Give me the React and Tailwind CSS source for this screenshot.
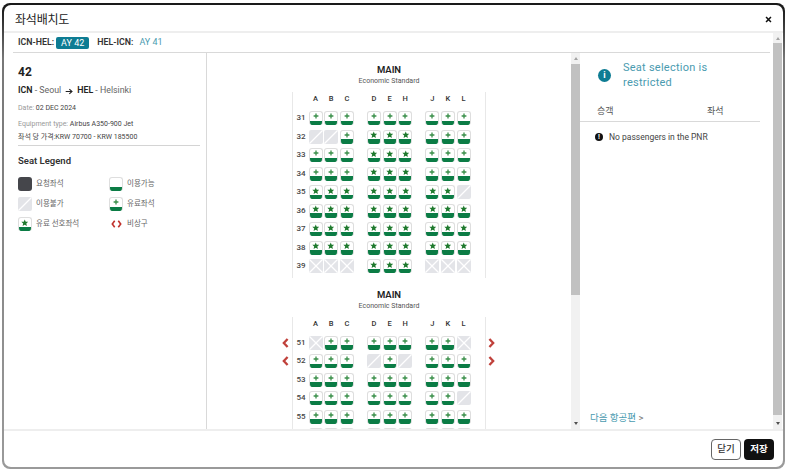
import React from "react";

const FONT = "font-['Roboto','Noto_Sans_CJK_KR','Noto_Sans',sans-serif]";

function Glyph({ type }) {
  if (type === "star") {
    return (
      <svg viewBox="0 0 10 10" className="h-[7.5px] w-[7.5px]">
        <polygon points="5,0.5 6.3,3.6 9.6,3.8 7.1,6 7.9,9.3 5,7.5 2.1,9.3 2.9,6 0.4,3.8 3.7,3.6" fill="#1f7a2e" />
      </svg>
    );
  }
  return (
    <svg viewBox="0 0 10 10" className="h-[6px] w-[6px]">
      <path d="M5 1V9M1 5H9" stroke="#3a8f4a" strokeWidth="2.2" fill="none" />
    </svg>
  );
}

function Seat({ type, size = "h-[14px] w-[14px]" }) {
  if (type === "blocked" || type === "x") {
    return (
      <div className={`${size} shrink-0 overflow-hidden rounded-[2px] bg-[#e3e4e8]`}>
        <svg viewBox="0 0 14 14" className="block h-full w-full">
          <path d="M0.5 13.5L13.5 0.5" stroke="#fff" strokeWidth="1.3" />
          {type === "x" && <path d="M0.5 0.5L13.5 13.5" stroke="#fff" strokeWidth="1.3" />}
        </svg>
      </div>
    );
  }
  return (
    <div className={`${size} flex shrink-0 flex-col overflow-hidden rounded-[3px] border-x border-t border-[#dedede] bg-white`}>
      <div className="flex flex-1 items-center justify-center">
        {type !== "empty" && <Glyph type={type} />}
      </div>
      <div className="-mx-px h-[4.5px] rounded-b-[3px] bg-[#0b7c45]" />
    </div>
  );
}

function Chevron({ dir }) {
  return (
    <svg viewBox="0 0 8 12" className="h-[10px] w-[7px]">
      <path d={dir === "l" ? "M6.5 1.2L2 6L6.5 10.8" : "M1.5 1.2L6 6L1.5 10.8"} stroke="#c0413b" strokeWidth="2.8" fill="none" />
    </svg>
  );
}

const p = "plus", s = "star", b = "blocked", x = "x";
const deck1 = [
  [31, [p, p, p], [p, p, p], [p, p, p]],
  [32, [b, b, p], [s, s, s], [p, p, p]],
  [33, [p, p, p], [s, s, s], [p, p, p]],
  [34, [p, p, p], [s, s, s], [p, p, p]],
  [35, [s, s, s], [s, s, s], [s, s, b]],
  [36, [s, s, s], [s, s, s], [s, s, s]],
  [37, [s, s, s], [s, s, s], [s, s, s]],
  [38, [s, s, s], [s, s, s], [s, s, s]],
  [39, [x, x, x], [s, s, s], [x, x, x]],
];
const deck2 = [
  [51, [x, p, p], [p, p, p], [p, p, x]],
  [52, [p, p, p], [b, p, b], [p, p, p]],
  [53, [p, p, p], [p, p, p], [p, p, p]],
  [54, [p, p, p], [p, p, p], [p, p, b]],
  [55, [p, p, p], [p, p, p], [p, p, p]],
  ["", [p, p, p], [p, p, p], [p, p, p]],
];
const groups = [["A", "B", "C"], ["D", "E", "H"], ["J", "K", "L"]];

function Deck({ rows, arrows }) {
  return (
    <div className="mt-[11px] flex flex-col items-center">
      <div className="h-[12px] text-[9.5px] font-semibold leading-[12px] text-[#222]">MAIN</div>
      <div className="h-[10px] text-[7px] leading-[10px] text-[#555]">Economic Standard</div>
      <div className="mt-[6px] flex flex-col">
        <div className="flex">
          <div className="w-[13px]" />
          <div className="flex h-[19px] w-[194px] border-x-[1.5px] border-[#e8e8e8] pl-[16px] pt-[1px]">
            {groups.map((g) => (
              <div key={g[0]} className="mr-[13px] flex gap-[1.7px]">
                {g.map((l) => (
                  <div key={l} className="h-[12px] w-[14px] text-center text-[7.5px] font-medium leading-[12px] text-[#333]">{l}</div>
                ))}
              </div>
            ))}
          </div>
          <div className="w-[14px]" />
        </div>
        {rows.map((r, i) => (
          <div key={i} className="flex">
            <div className="flex w-[13px] items-start justify-start pl-[3px] pt-[2px]">
              {arrows && i < 2 && <Chevron dir="l" />}
            </div>
            <div className="flex h-[18.5px] w-[194px] border-x-[1.5px] border-[#e8e8e8] pl-[4px]">
              <div className="w-[12px] text-[8px] font-medium leading-[14px] text-[#444]">{r[0]}</div>
              {[r[1], r[2], r[3]].map((g, gi) => (
                <div key={gi} className="mr-[13px] flex gap-[1.7px]">
                  {g.map((t, ti) => <Seat key={ti} type={t} />)}
                </div>
              ))}
            </div>
            <div className="flex w-[14px] items-start justify-end pr-[5px] pt-[2px]">
              {arrows && i < 2 && <Chevron dir="r" />}
            </div>
          </div>
        ))}
      </div>
    </div>
  );
}

function LegendItem({ icon, label }) {
  return (
    <div className="flex h-[14px] items-center gap-[4px]">
      {icon}
      <span className="text-[7.5px] text-[#666]">{label}</span>
    </div>
  );
}

function Scrollbar({ thumbTop, thumbBottom }) {
  return (
    <div className="flex h-full w-[9px] shrink-0 flex-col bg-[#f1f1f1]">
      <div className="flex justify-center" style={{ height: thumbTop }}>
        <div className="mt-[4px] h-0 w-0 border-x-[2.5px] border-b-[3px] border-x-transparent border-b-[#a3a3a3]" />
      </div>
      <div className="flex-1 bg-[#c1c1c1]" />
      <div className="flex items-end justify-center" style={{ height: thumbBottom }}>
        <div className="mb-[4px] h-0 w-0 border-x-[2.5px] border-t-[3px] border-x-transparent border-t-[#505050]" />
      </div>
    </div>
  );
}

export default function App() {
  return (
    <div className={`h-[471px] w-[787px] overflow-hidden bg-white pb-[2px] pl-[2px] pr-[2px] pt-[3px] ${FONT}`}>
      <div className="flex h-full flex-col rounded-[8px] bg-[linear-gradient(#1a1a1a,#1a1a1a_1%,#777_12%,#9a9a9a)] pb-[2px] pl-[2px] pr-[2px] pt-[2px]">
        <div className="flex min-h-0 flex-1 flex-col overflow-hidden rounded-[7px] bg-white">
          <div className="flex h-[28px] shrink-0 items-center justify-between border-b-2 border-[#eeeeee] pl-[11px] pr-[11px] pt-[3px]">
            <span className="text-[12px] leading-none tracking-[-0.2px] text-[#222]">좌석배치도</span>
            <svg viewBox="0 0 10 10" className="h-[7px] w-[7px]">
              <path d="M1.5 1.5L8.5 8.5M8.5 1.5L1.5 8.5" stroke="#111" strokeWidth="2.2" />
            </svg>
          </div>

          <div className="flex min-h-0 flex-1">
            <div className="flex min-w-0 flex-1 flex-col pl-[9px] pr-[3px]">
              <div className="flex h-[20px] shrink-0 items-center border-b border-[#d9d9d9] pl-[5px] pt-[1px] text-[8.8px]">
                <span className="font-semibold text-[#333]">ICN-HEL:</span>
                <span className="ml-[2px] rounded-[2px] bg-[#0e7c93] px-[5px] py-px text-[9px] leading-[10px] text-white">AY 42</span>
                <span className="ml-[8px] font-semibold text-[#333]">HEL-ICN:</span>
                <span className="ml-[6px] text-[9px] text-[#4a9bb0]">AY 41</span>
              </div>

              <div className="flex min-h-0 flex-1">
                <div className="w-[194px] shrink-0 border-r border-[#d9d9d9] pl-[5px] pr-[6px] pt-[12px]">
                  <div className="text-[12px] font-bold leading-[14px] text-[#222]">42</div>
                  <div className="mt-[6px] flex h-[12px] items-center text-[8.8px] text-[#666]">
                    <span className="font-semibold text-[#222]">ICN</span>
                    <span>&nbsp;- Seoul</span>
                    <svg viewBox="0 0 12 10" className="mx-[4px] h-[7px] w-[8px]">
                      <path d="M1 5H10M6.5 1.5L10.5 5L6.5 8.5" stroke="#222" strokeWidth="1.6" fill="none" />
                    </svg>
                    <span className="font-semibold text-[#222]">HEL</span>
                    <span>&nbsp;- Helsinki</span>
                  </div>
                  <div className="mt-[6px] h-[10px] text-[7px] leading-[10px] text-[#999]">
                    Date: <span className="text-[#444]">02 DEC 2024</span>
                  </div>
                  <div className="mt-[6px] h-[10px] text-[7px] leading-[10px] text-[#999]">
                    Equipment type: <span className="text-[#444]">Airbus A350-900 Jet</span>
                  </div>
                  <div className="mt-[3px] h-[10px] text-[7px] leading-[10px] text-[#444]">좌석 당 가격:KRW 70700 - KRW 185500</div>
                  <div className="mt-[3px] border-t border-[#d4d4d4] pt-[9px] text-[9.5px] font-semibold leading-[12px] text-[#333]">Seat Legend</div>
                  <div className="mt-[10px] grid grid-cols-[91px_1fr] gap-y-[6px]">
                    <LegendItem icon={<div className="h-[14px] w-[14px] rounded-[3px] bg-[#45464b]" />} label="요청좌석" />
                    <LegendItem icon={<Seat type="empty" />} label="이용가능" />
                    <LegendItem icon={<Seat type="blocked" />} label="이용불가" />
                    <LegendItem icon={<Seat type="plus" />} label="유료좌석" />
                    <LegendItem icon={<Seat type="star" />} label="유료 선호좌석" />
                    <LegendItem
                      icon={
                        <div className="flex h-[14px] w-[14px] items-center justify-center gap-[1px]">
                          <svg viewBox="0 0 5 10" className="h-[8px] w-[5px]"><path d="M4 1L1 5L4 9" stroke="#c0312c" strokeWidth="2" fill="none" /></svg>
                          <svg viewBox="0 0 5 10" className="h-[8px] w-[5px]"><path d="M1 1L4 5L1 9" stroke="#c0312c" strokeWidth="2" fill="none" /></svg>
                        </div>
                      }
                      label="비상구"
                    />
                  </div>
                </div>

                <div className="min-w-0 flex-1 overflow-hidden">
                  <Deck rows={deck1} />
                  <Deck rows={deck2} arrows />
                </div>

                <Scrollbar thumbTop={11} thumbBottom={134} />

                <div className="flex w-[190px] shrink-0 flex-col pb-[5px]">
                  <div className="flex items-center pl-[18px] pt-[7px]">
                    <div className="flex h-[13px] w-[13px] items-center justify-center rounded-full bg-[#0e7c93] text-[9px] font-bold leading-none text-white">i</div>
                    <div className="ml-[12px] text-[11px] leading-[15px] tracking-[0.25px] text-[#4a9bb0]">
                      Seat selection is<br />restricted
                    </div>
                  </div>
                  <div className="mr-[10px] mt-[12px] flex h-[20px] items-center border-b border-[#d9d9d9] pl-[17px] text-[9px] text-[#555]">
                    <span className="w-[110px]">승객</span>
                    <span>좌석</span>
                  </div>
                  <div className="mt-[9px] flex items-center pl-[15px] text-[8.5px] text-[#444]">
                    <div className="flex h-[8px] w-[8px] items-center justify-center rounded-full bg-[#111] text-[7px] font-bold leading-none text-white">!</div>
                    <span className="ml-[6px]">No passengers in the PNR</span>
                  </div>
                  <div className="mt-auto pl-[10px] text-[9.5px] leading-[12px] text-[#4a9bb0]">
                    다음 항공편 <span className="text-[#777]">&gt;</span>
                  </div>
                </div>
              </div>
            </div>
            <div className="mr-[1px] h-full">
              <Scrollbar thumbTop={10} thumbBottom={14} />
            </div>
          </div>

          <div className="flex h-[38px] shrink-0 items-center justify-end gap-[3px] border-t-2 border-[#eeeeee] pr-[9px]">
            <button className="h-[21px] w-[30px] rounded-[4px] border border-[#666] bg-white text-[9.5px] font-medium text-[#333]">닫기</button>
            <button className="h-[21px] w-[30px] rounded-[4px] bg-[#111] text-[9.5px] font-bold text-white">저장</button>
          </div>
        </div>
      </div>
    </div>
  );
}
